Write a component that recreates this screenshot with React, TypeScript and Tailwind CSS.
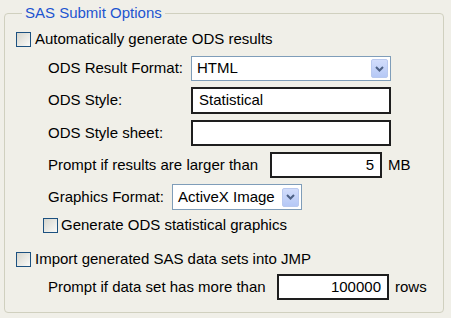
import React from "react";

const font = { fontFamily: '"Liberation Sans", Arial, sans-serif' };

const Checkbox = () => (
  <span className="inline-block w-[15px] h-[15px] shrink-0 border border-[#1c5180] bg-gradient-to-br from-[#d6d6ce] to-[#fafaf8]" />
);

const Arrow = () => (
  <span className="ml-auto mr-[2px] flex h-[19px] w-[17px] items-center justify-center rounded-[2px] border border-[#b9c9ef] bg-gradient-to-b from-[#d2ddfb] to-[#b5c8f6]">
    <svg width="9" height="6" viewBox="0 0 9 6">
      <path d="M1 1 L4.5 4.5 L8 1" fill="none" stroke="#4d6185" strokeWidth="2" />
    </svg>
  </span>
);

const Select = ({ value, w }: { value: string; w: string }) => (
  <div className={`flex h-[25px] items-center border border-[#7f9db9] bg-white pl-[5px] ${w}`}>
    <span>{value}</span>
    <Arrow />
  </div>
);

const Field = ({ value, w, right }: { value?: string; w: string; right?: boolean }) => (
  <div
    className={`flex h-[26px] items-center border-2 border-[#1e1e1e] bg-white px-[6px] ${w} ${
      right ? "justify-end" : ""
    }`}
  >
    {value}
  </div>
);

export default function App() {
  return (
    <div className="w-[451px] h-[318px] bg-[#f0efe8] pt-[4px] pl-[4px] text-[15px] text-black" style={font}>
      <fieldset className="w-[440px] h-[309px] rounded-[4px] border border-[#d0d0bf] pl-[11px]">
        <legend className="ml-[6px] px-[3px] leading-[18px] text-[#1e55d0]">SAS Submit Options</legend>

        <div className="mt-[8px] flex h-[18px] items-center gap-[4px]">
          <Checkbox />
          <span>Automatically generate ODS results</span>
        </div>

        <div className="ml-[32px]">
          <div className="mt-[8px] flex items-center">
            <span className="w-[143px]">ODS Result Format:</span>
            <Select value="HTML" w="w-[200px]" />
          </div>
          <div className="mt-[6px] flex items-center">
            <span className="w-[143px]">ODS Style:</span>
            <Field value="Statistical" w="w-[200px] h-[27px]" />
          </div>
          <div className="mt-[6px] flex items-center">
            <span className="w-[143px]">ODS Style sheet:</span>
            <Field w="w-[200px]" />
          </div>
          <div className="mt-[6px] flex items-center">
            <span className="w-[222px]">Prompt if results are larger than</span>
            <Field value="5" w="w-[112px]" right />
            <span className="ml-[6px]">MB</span>
          </div>
          <div className="mt-[6px] flex items-center">
            <span className="w-[124px]">Graphics Format:</span>
            <Select value="ActiveX Image" w="w-[130px] h-[26px]" />
          </div>
        </div>

        <div className="ml-[27px] mt-[6px] flex h-[18px] items-center gap-[3px]">
          <Checkbox />
          <span>Generate ODS statistical graphics</span>
        </div>

        <div className="mt-[16px] flex h-[18px] items-center gap-[4px]">
          <Checkbox />
          <span>Import generated SAS data sets into JMP</span>
        </div>

        <div className="ml-[32px] mt-[6px] flex items-center">
          <span className="w-[229px]">Prompt if data set has more than</span>
          <Field value="100000" w="w-[112px]" right />
          <span className="ml-[6px]">rows</span>
        </div>
      </fieldset>
    </div>
  );
}
